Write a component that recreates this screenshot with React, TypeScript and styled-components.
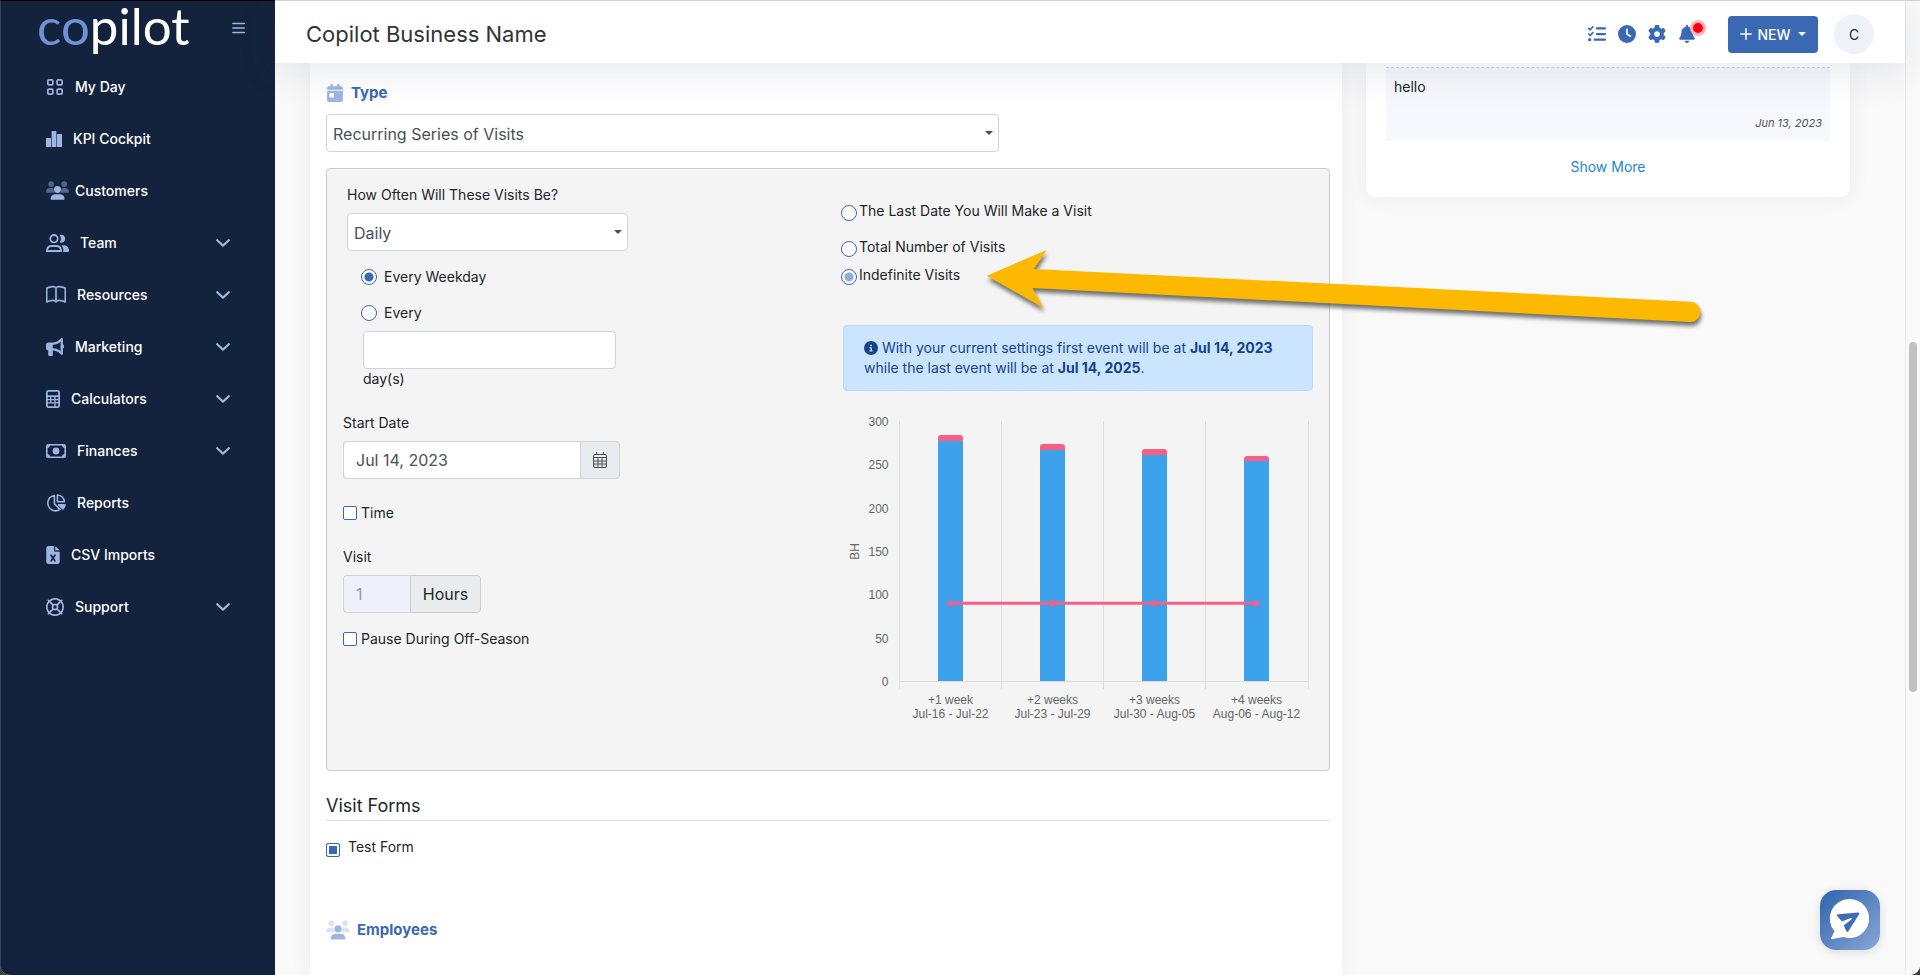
import React, { ReactNode } from 'react';
import styled, { createGlobalStyle, css } from 'styled-components';
import {
  FaListCheck, FaClock, FaGear, FaBell, FaBullhorn, FaFileExcel, FaRegLifeRing, FaCircleInfo,
} from 'react-icons/fa6';
import { FaCalendarDay } from 'react-icons/fa';
import { BsBook } from 'react-icons/bs';

const colors = {
  navy: '#14233d',
  iconBlue: '#9db5e0',
  blue: '#3a68b3',
  softBlue: '#93abd6',
  text: '#212529',
  field: '#495057',
  border: '#ced4da',
  panel: '#f4f4f4',
};

const GlobalStyle = createGlobalStyle`
  *, *::before, *::after { box-sizing: border-box; }
  body { margin: 0; background: #37433f; }
  body, button, input, select { font-family: Inter, "Liberation Sans", sans-serif; }
  button { cursor: pointer; }
`;

const Shell = styled.div`
  position: relative;
  display: flex;
  height: 100vh;
  overflow: hidden;
  border-radius: 0 0 10px 10px;
  background: #f9f9f9;
  color: ${colors.text};
  font-size: 14px;
  line-height: 20px;
`;

/* ---------- sidebar ---------- */

const Sidebar = styled.aside`
  flex: 0 0 275px;
  background: ${colors.navy};
  border-top: 1px solid #000;
  border-left: 1px solid #33435a;
`;

const Brand = styled.div`
  display: flex;
  justify-content: space-between;
  align-items: flex-start;
  height: 60px;
  padding: 0 30px 0 36px;
`;

const Logo = styled.a`
  color: #fff;
  font-family: Lato, sans-serif;
  font-size: 51px;
  line-height: 50px;
  text-decoration: none;
  span { color: #6f93d2; }
`;

const IconButton = styled.button`
  display: flex;
  padding: 0;
  border: 0;
  background: none;
  color: ${colors.blue};
`;

const MenuButton = styled(IconButton)`
  margin-top: 21px;
  color: ${colors.iconBlue};
`;

const NavLink = styled.a`
  display: flex;
  align-items: center;
  gap: 11px;
  height: 52px;
  padding: 0 45px;
  color: #fff;
  font-weight: 500;
  text-decoration: none;
`;

const NavIcon = styled.span<{ $width: number }>`
  display: flex;
  flex: none;
  width: ${(p) => p.$width}px;
  color: ${colors.iconBlue};
  svg { flex: none; }
`;

const NavLabel = styled.span`
  flex: 1;
`;

/* ---------- header ---------- */

const Main = styled.main`
  flex: 1;
  min-width: 0;
  display: flex;
  flex-direction: column;
`;

const TopBar = styled.header`
  position: relative;
  z-index: 1;
  flex: none;
  display: flex;
  align-items: center;
  height: 63px;
  padding: 4px 31px 0 31px;
  background: #fff;
  border-top: 1px solid #d3d3d3;
  box-shadow: 0 8px 40px rgba(40, 50, 90, 0.11);
`;

const Title = styled.h1`
  flex: 1;
  margin: 0;
  color: #333;
  font-size: 22px;
  line-height: 28px;
  font-weight: 400;
`;

const Actions = styled.div`
  display: flex;
  align-items: center;
  gap: 12px;
`;

const BellWrap = styled(IconButton)`
  position: relative;
  margin-right: 20px;
`;

const AlertDot = styled.span`
  position: absolute;
  left: 12px;
  top: -5px;
  width: 16px;
  height: 16px;
  border: 3px solid #fbb4b8;
  border-radius: 50%;
  background: #f90010;
`;

const NewButton = styled.button`
  display: flex;
  align-items: center;
  justify-content: center;
  gap: 5px;
  width: 90px;
  height: 37px;
  padding: 0;
  border: 0;
  border-radius: 4px;
  background: ${colors.blue};
  color: #fff;
  font-size: 14px;
  font-weight: 500;
  svg:last-child { margin-left: 2px; }
`;

const Avatar = styled.button`
  width: 40px;
  height: 40px;
  margin-left: 4px;
  padding: 0;
  border: 0;
  border-radius: 50%;
  background: #eff2fa;
  color: #222;
  font-size: 14px;
`;

/* ---------- content ---------- */

const Content = styled.div`
  flex: 1;
  min-height: 0;
  display: grid;
  grid-template-columns: 258fr 121fr;
  gap: 24px;
  align-items: start;
  padding: 0 55px 0 35px;
`;

const FormCard = styled.section`
  min-height: 100%;
  padding: 20px 12px 34px 16px;
  background: #fff;
  box-shadow: 0 0 24px rgba(0, 0, 0, 0.05);
`;

const SectionTitle = styled.h2<{ $top?: number }>`
  display: flex;
  align-items: center;
  gap: 7px;
  height: 20px;
  margin: ${(p) => p.$top ?? 0}px 0 0;
  color: ${colors.blue};
  font-size: 15px;
  line-height: 20px;
  font-weight: 700;
  svg { flex: none; color: ${colors.iconBlue}; }
`;

const fieldBox = css`
  height: 38px;
  border: 1px solid ${colors.border};
  border-radius: 4px;
  background: #fff;
  color: ${colors.field};
  font-size: 16px;
`;

const SelectWrap = styled.div<{ $width: string; $top?: number }>`
  display: grid;
  align-items: center;
  width: ${(p) => p.$width};
  margin-top: ${(p) => p.$top ?? 0}px;
  > * { grid-area: 1 / 1; }
  svg { justify-self: end; margin-right: 6px; pointer-events: none; }
`;

const SelectBox = styled.select`
  ${fieldBox}
  width: 100%;
  padding: 2px 20px 0 6px;
  appearance: none;
`;

const TextInput = styled.input`
  ${fieldBox}
  padding: 0 12px;
  &:disabled { background: #eef1fa; color: #8b9bb0; opacity: 1; }
`;

const Panel = styled.div`
  display: grid;
  grid-template-columns: minmax(0, 1fr) minmax(0, 1fr);
  gap: 30px;
  margin-top: 16px;
  padding: 16px 16px 15px;
  border: 1px solid #ccc;
  border-radius: 4px;
  background: ${colors.panel};
`;

const Label = styled.label<{ $top?: number }>`
  display: block;
  margin: ${(p) => p.$top ?? 0}px 0 8px;
`;

const Frequency = styled.div`
  padding-left: 4px;
`;

const PatternList = styled.div`
  display: flex;
  flex-direction: column;
  gap: 16px;
  padding: 16px 0 8px 14px;
`;

const ChoiceLabel = styled.label<{ $gap: number; $top?: number }>`
  display: flex;
  align-items: center;
  gap: ${(p) => p.$gap}px;
  margin-top: ${(p) => p.$top ?? 0}px;
`;

const LoweredChoice = styled(ChoiceLabel)`
  align-items: flex-start;
  input[type='radio'] { margin-top: 4px; }
  input[type='checkbox'] { margin-top: 6px; }
`;

const tick = css`
  flex: none;
  margin: 0;
  appearance: none;
  border: 1px solid ${colors.blue};
  background: #fff;
`;

const Radio = styled.input<{ $soft?: boolean }>`
  ${tick}
  width: 16px;
  height: 16px;
  border-radius: 50%;
  &:checked {
    background: radial-gradient(circle, ${(p) => (p.$soft ? colors.softBlue : colors.blue)} 0 4px, #fff 5px);
  }
`;

const Checkbox = styled.input`
  ${tick}
  width: 14px;
  height: 14px;
  border-radius: 2px;
  &:checked { background: ${colors.blue}; box-shadow: inset 0 0 0 2px #fff; }
`;

const Interval = styled.div`
  display: flex;
  flex-direction: column;
  width: 269px;
  padding-left: 16px;
`;

const InputGroup = styled.div<{ $width: number }>`
  display: flex;
  width: ${(p) => p.$width}px;
  ${TextInput} {
    flex: 1;
    min-width: 0;
    border-radius: 4px 0 0 4px;
    border-right: 0;
  }
`;

const addon = css`
  display: flex;
  align-items: center;
  justify-content: center;
  border: 1px solid ${colors.border};
  border-radius: 0 4px 4px 0;
  background: #e9ecef;
`;

const DateButton = styled.button`
  ${addon}
  width: 40px;
  padding: 0;
  color: ${colors.field};
`;

const Unit = styled.span`
  ${addon}
  width: 71px;
  border-color: #ccc;
  font-size: 16px;
`;

const EndOptions = styled.div`
  display: flex;
  flex-direction: column;
  margin: 16px 0 40px -2px;
`;

const Notice = styled.p`
  margin: 0 0 16px;
  padding: 12px 20px;
  border: 1px solid #b8daff;
  border-radius: 4px;
  background: #cce5ff;
  color: #14438a;
  svg { vertical-align: -2px; }
`;

const Chart = styled.svg`
  display: block;
  width: 100%;
  height: auto;
  font-family: "Liberation Sans", sans-serif;
  font-size: 12px;
`;

const FormsTitle = styled.h3`
  margin: 23px 0 0;
  padding-bottom: 2px;
  border-bottom: 1px solid #dee2e6;
  font-size: 18px;
  line-height: 24px;
  font-weight: 400;
`;

const NotesCard = styled.section`
  padding: 4px 20px 20px;
  border-radius: 0 0 10px 10px;
  background: #fff;
  box-shadow: 0 0 24px rgba(0, 0, 0, 0.05);
  text-align: center;
`;

const Note = styled.article`
  display: flex;
  flex-direction: column;
  justify-content: space-between;
  height: 74px;
  margin-bottom: 16px;
  padding: 9px 8px 8px;
  border-top: 1px dashed #d5d7dc;
  background: #f7f8fd;
  text-align: left;
  p { margin: 0; }
  time { align-self: flex-end; color: #555; font-size: 11px; font-style: italic; }
`;

const MoreLink = styled.a`
  color: #1c87cf;
  text-decoration: none;
`;

/* ---------- page edge and floating parts ---------- */

const ScrollTrack = styled.div`
  flex: 0 0 15px;
  padding: 341px 2px 0 3px;
  border-left: 1px solid #e8e8e8;
  background: #fafafa;
  border-top: 1px solid #d3d3d3;
`;

const ScrollThumb = styled.div`
  width: 8px;
  height: 350px;
  border-radius: 4px;
  background: #c1c1c1;
`;

const ChatButton = styled.button`
  position: absolute;
  right: 40px;
  bottom: 25px;
  z-index: 2;
  width: 60px;
  height: 60px;
  padding: 0;
  border: 0;
  border-radius: 16px;
  background: linear-gradient(135deg, #2f64ae, #89a6d6);
  box-shadow: 0 2px 10px rgba(0, 0, 0, 0.12);
`;

const Arrow = styled.svg`
  position: absolute;
  left: 980px;
  top: 240px;
  z-index: 2;
  pointer-events: none;
  filter: drop-shadow(1px 4px 2px rgba(0, 0, 0, 0.55));
`;

/* ---------- icons ---------- */

const GridIcon = () => (
  <svg width="18" height="18" viewBox="0 0 18 18" fill="none" stroke="currentColor" strokeWidth="1.700" aria-hidden="true">
    <rect x="1.850" y="1.850" width="5" height="5" rx="1.200" />
    <rect x="11.150" y="1.850" width="5" height="5" rx="1.200" />
    <rect x="1.850" y="11.150" width="5" height="5" rx="1.200" />
    <rect x="11.150" y="11.150" width="5" height="5" rx="1.200" />
  </svg>
);

const PeopleIcon = ({ width, faded }: { width: number; faded: number }) => (
  <svg width={width} height={(width * 20) / 24} viewBox="0 0 24 20" fill="currentColor" aria-hidden="true">
    <g opacity={faded}>
      <circle cx="5.4" cy="3.2" r="3" />
      <circle cx="19" cy="3.2" r="3" />
      <path d="M0 11.6C0 9 1.6 7.4 4 7.4h2.2c1 0 1.4.3 2.1.8-.4 1.6 0 3 .8 4H.6c-.4 0-.6-.2-.6-.6z" />
      <path d="M24 11.6C24 9 22.4 7.4 20 7.4h-2c-1 0-1.6.3-2.3.8.4 1.6 0 3-.8 4h8.500c.4 0 .6-.2.6-.6z" />
    </g>
    <circle cx="12" cy="8.800" r="3.600" />
    <path d="M4.800 18.800c0-3.200 2-5 5-5h4.600c3 0 5 1.800 5 5 0 .5-.3.800-.8.800H5.600c-.5 0-.8-.3-.8-.8z" />
  </svg>
);

const TeamIcon = () => (
  <svg width="23" height="18" viewBox="0 0 23 18" fill="none" stroke="currentColor" strokeWidth="1.800" aria-hidden="true">
    <circle cx="8" cy="4.700" r="3.700" />
    <path d="M1 17c0-3.400 2-5 4.800-5h4.400c2.800 0 4.800 1.600 4.800 5z" />
    <path d="M13.600 1c3.600-.8 5.600 1.200 5.600 3.800s-2.200 4.500-5.400 3.700c1.600-2.400 1.400-5.400-.2-7.500z" fill="currentColor" stroke="none" />
    <path d="M15.500 11.200h2.300c3 0 5.200 2.200 5.200 5.400 0 .8-.4 1.300-1.100 1.300h-4.700c.4-2.700-.2-5-1.700-6.700z" fill="currentColor" stroke="none" />
  </svg>
);

const BookIcon = styled(BsBook)`
  stroke: currentColor;
  stroke-width: 0.4px;
`;

const BarsIcon = () => (
  <svg width="16" height="16" viewBox="0 0 16 16" fill="currentColor" aria-hidden="true">
    <rect x="0" y="7" width="5" height="9" rx="0.500" />
    <rect x="5.600" y="0" width="4.800" height="16" rx="0.500" />
    <rect x="11" y="3" width="5" height="13" rx="0.500" />
  </svg>
);

const CalculatorIcon = () => (
  <svg width="14" height="18" viewBox="0 0 14 18" fill="none" stroke="currentColor" aria-hidden="true">
    <rect x="0.900" y="0.900" width="12.200" height="16.200" rx="1.500" strokeWidth="1.800" />
    <path d="M1 6.200h12" strokeWidth="1.800" />
    <path d="M1 9.600h12M1 12.800h12M4.800 6v7M9 6v11" strokeWidth="1.300" />
  </svg>
);

const MoneyIcon = () => (
  <svg width="20" height="14" viewBox="0 0 20 14" fill="none" stroke="currentColor" strokeWidth="1.600" aria-hidden="true">
    <rect x="0.800" y="0.800" width="18.400" height="12.400" rx="1.200" />
    <circle cx="10" cy="7" r="3.400" fill="currentColor" stroke="none" />
    <path d="M1 3.200c1.200 0 2.200-1 2.200-2.200M19 3.200c-1.200 0-2.200-1-2.200-2.200M1 10.800c1.200 0 2.200 1 2.200 2.200M19 10.800c-1.200 0-2.200 1-2.200 2.200" />
  </svg>
);

const PieIcon = () => (
  <svg width="20" height="18" viewBox="0 0 20 18" fill="none" stroke="currentColor" strokeWidth="1.600" strokeLinejoin="round" aria-hidden="true">
    <path d="M8.400 1.500C4.500 2 1.800 5.200 1.800 9c0 4.300 3.300 7.900 7.600 7.900 1.700 0 3.200-.5 4.600-1.500L8.400 9.800z" />
    <path d="M11.400 1v6.700h7C18.200 4 15.200 1.200 11.400 1z" />
    <path d="M12.600 10.800H19c-.2 1.700-.9 3-2 4.200z" fill="currentColor" />
  </svg>
);

const SheetIcon = styled(FaFileExcel)`
  width: 14px;
  height: 18px;
`;

const ChevronIcon = () => (
  <svg width="14" height="8" viewBox="0 0 14 8" fill="none" stroke={colors.iconBlue} strokeWidth="2.200" strokeLinecap="round" strokeLinejoin="round" aria-hidden="true">
    <path d="M1.200 1.200 7 6.600l5.800-5.400" />
  </svg>
);

const CaretIcon = ({ color }: { color: string }) => (
  <svg width="8" height="4" viewBox="0 0 8 4" fill={color} aria-hidden="true">
    <path d="M0 0h8L4 4z" />
  </svg>
);

const CalendarIcon = () => (
  <svg width="14" height="16" viewBox="0 0 14 16" fill="none" stroke="currentColor" aria-hidden="true">
    <rect x="0.500" y="2.500" width="13" height="13" rx="1.500" />
    <path d="M3.500 0v2.500M10.500 0v2.500M.5 5.500h13M.5 9h13M.5 12h13M5 5.500v10M9 5.500v10" />
  </svg>
);

type NavItem = { label: string; slot: number; icon: ReactNode; expandable?: boolean };

const navItems: NavItem[] = [
  { label: 'My Day', slot: 18, icon: <GridIcon /> },
  { label: 'KPI Cockpit', slot: 16, icon: <BarsIcon /> },
  { label: 'Customers', slot: 18, icon: <PeopleIcon width={23} faded={0.45} /> },
  { label: 'Team', slot: 23, icon: <TeamIcon />, expandable: true },
  { label: 'Resources', slot: 20, icon: <BookIcon size={20} />, expandable: true },
  { label: 'Marketing', slot: 18, icon: <FaBullhorn size={18} />, expandable: true },
  { label: 'Calculators', slot: 14, icon: <CalculatorIcon />, expandable: true },
  { label: 'Finances', slot: 20, icon: <MoneyIcon />, expandable: true },
  { label: 'Reports', slot: 20, icon: <PieIcon /> },
  { label: 'CSV Imports', slot: 14, icon: <SheetIcon /> },
  { label: 'Support', slot: 18, icon: <FaRegLifeRing size={18} />, expandable: true },
];

const weeks = [
  { name: '+1 week', range: 'Jul-16 - Jul-22', top: 28, split: 34 },
  { name: '+2 weeks', range: 'Jul-23 - Jul-29', top: 37, split: 43 },
  { name: '+3 weeks', range: 'Jul-30 - Aug-05', top: 42, split: 48 },
  { name: '+4 weeks', range: 'Aug-06 - Aug-12', top: 49, split: 54 },
];

const axisTicks = [300, 250, 200, 150, 100, 50, 0];

const HoursChart = () => (
  <Chart viewBox="0 0 470 348" role="img" aria-label="Budgeted hours for the next four weeks">
    <g stroke="#dedede">
      {[56.5, 158.5, 260.5, 362.5, 465.5].map((x) => (
        <line key={x} x1={x} x2={x} y1="14" y2="282" />
      ))}
      <line x1="56" x2="466" y1="274.5" y2="274.5" />
    </g>
    <g fill="#666" textAnchor="end">
      {axisTicks.map((value) => (
        <text key={value} x="45.500" y={279 - (value * 260) / 300}>{value}</text>
      ))}
    </g>
    <text fill="#666" textAnchor="middle" transform="translate(15.500 144.500) rotate(-90)">BH</text>
    {weeks.map((week, i) => {
      const x = 95 + i * 102;
      return (
        <g key={week.name}>
          <rect x={x} y={week.split} width="25" height={274 - week.split} fill="#3ba2eb" />
          <path d={`M${x} ${week.split}v${3 - week.split + week.top}q0-3 3-3h19q3 0 3 3v${week.split - week.top - 3}z`} fill="#f95f85" />
          <g fill="#666" textAnchor="middle">
            <text x={x + 12.5} y="297">{week.name}</text>
            <text x={x + 12.5} y="311">{week.range}</text>
          </g>
        </g>
      );
    })}
    <line x1="107.500" x2="413.500" y1="196.300" y2="196.300" stroke="#f95f85" strokeWidth="3" />
    <g fill="#f95f85" fillOpacity="0.5" stroke="#f95f85">
      {weeks.map((week, i) => (
        <circle key={week.name} cx={107.5 + i * 102} cy="196.300" r="3" />
      ))}
    </g>
  </Chart>
);

const App = () => (
  <>
    <GlobalStyle />
    <Shell>
      <Sidebar>
        <Brand>
          <Logo href="#home"><span>co</span>pilot</Logo>
          <MenuButton aria-label="Collapse menu">
            <svg width="13" height="12" viewBox="0 0 13 12" stroke="currentColor" strokeWidth="1.600" strokeLinecap="round" aria-hidden="true">
              <path d="M.8 1.500h11.400M.8 6h11.400M.8 10.500h11.400" />
            </svg>
          </MenuButton>
        </Brand>
        <nav>
          {navItems.map((item) => (
            <NavLink key={item.label} href="#nav">
              <NavIcon $width={item.slot}>{item.icon}</NavIcon>
              <NavLabel>{item.label}</NavLabel>
              {item.expandable && <ChevronIcon />}
            </NavLink>
          ))}
        </nav>
      </Sidebar>

      <Main>
        <TopBar>
          <Title>Copilot Business Name</Title>
          <Actions>
            <IconButton aria-label="Tasks"><FaListCheck size={18} /></IconButton>
            <IconButton aria-label="Time"><FaClock size={18} /></IconButton>
            <IconButton aria-label="Settings"><FaGear size={18} /></IconButton>
            <BellWrap aria-label="Notifications">
              <FaBell size={18} />
              <AlertDot />
            </BellWrap>
            <NewButton>
              <svg width="12" height="12" viewBox="0 0 12 12" stroke="currentColor" strokeWidth="1.500" strokeLinecap="round" aria-hidden="true">
                <path d="M6 .8v10.400M.8 6h10.400" />
              </svg>
              NEW
              <CaretIcon color="#fff" />
            </NewButton>
            <Avatar>C</Avatar>
          </Actions>
        </TopBar>

        <Content>
          <FormCard>
            <SectionTitle><FaCalendarDay size={18} />Type</SectionTitle>
            <SelectWrap $width="67%" $top={11}>
              <SelectBox aria-label="Type" defaultValue="recurring">
                <option value="recurring">Recurring Series of Visits</option>
              </SelectBox>
              <CaretIcon color="#495057" />
            </SelectWrap>

            <Panel>
              <div>
                <Frequency>
                  <Label htmlFor="often">How Often Will These Visits Be?</Label>
                  <SelectWrap $width="281px">
                    <SelectBox id="often" defaultValue="daily">
                      <option value="daily">Daily</option>
                    </SelectBox>
                    <CaretIcon color="#495057" />
                  </SelectWrap>
                  <PatternList>
                    <ChoiceLabel $gap={7}>
                      <Radio type="radio" name="pattern" defaultChecked />Every Weekday
                    </ChoiceLabel>
                    <ChoiceLabel $gap={7}>
                      <Radio type="radio" name="pattern" />Every
                    </ChoiceLabel>
                  </PatternList>
                  <Interval>
                    <TextInput id="interval" />
                    <label htmlFor="interval">day(s)</label>
                  </Interval>
                </Frequency>

                <Label htmlFor="start" $top={24}>Start Date</Label>
                <InputGroup $width={277}>
                  <TextInput id="start" defaultValue="Jul 14, 2023" />
                  <DateButton aria-label="Pick a date"><CalendarIcon /></DateButton>
                </InputGroup>
                <ChoiceLabel $gap={4} $top={24}><Checkbox type="checkbox" />Time</ChoiceLabel>

                <Label htmlFor="length" $top={24}>Visit</Label>
                <InputGroup $width={138}>
                  <TextInput id="length" defaultValue="1" disabled />
                  <Unit>Hours</Unit>
                </InputGroup>
                <ChoiceLabel $gap={4} $top={16}><Checkbox type="checkbox" />Pause During Off-Season</ChoiceLabel>
              </div>

              <div>
                <EndOptions>
                  <LoweredChoice $gap={2}>
                    <Radio type="radio" name="end" />The Last Date You Will Make a Visit
                  </LoweredChoice>
                  <LoweredChoice $gap={2} $top={16}>
                    <Radio type="radio" name="end" />Total Number of Visits
                  </LoweredChoice>
                  <LoweredChoice $gap={2} $top={8}>
                    <Radio type="radio" name="end" $soft defaultChecked />Indefinite Visits
                  </LoweredChoice>
                </EndOptions>
                <Notice>
                  <FaCircleInfo size={14} /> With your current settings first event will be at <b>Jul 14, 2023</b> while
                  the last event will be at <b>Jul 14, 2025</b>.
                </Notice>
                <HoursChart />
              </div>
            </Panel>

            <FormsTitle>Visit Forms</FormsTitle>
            <LoweredChoice $gap={8} $top={16}>
              <Checkbox type="checkbox" defaultChecked />Test Form
            </LoweredChoice>

            <SectionTitle $top={63}><PeopleIcon width={24} faded={0.35} />Employees</SectionTitle>
          </FormCard>

          <NotesCard>
            <Note>
              <p>hello</p>
              <time>Jun 13, 2023</time>
            </Note>
            <MoreLink href="#more">Show More</MoreLink>
          </NotesCard>
        </Content>
      </Main>

      <ScrollTrack><ScrollThumb /></ScrollTrack>

      <Arrow width="740" height="100" viewBox="0 0 740 100" aria-hidden="true">
        <path d="M6.800 35.700 66.600 10 54 29 711.200 61.700a10.200 10.200 0 0 1 0 20.300L52.500 48 63.500 68z" fill="#fcb900" />
      </Arrow>

      <ChatButton aria-label="Open chat">
        <svg width="60" height="60" viewBox="0 0 60 60" aria-hidden="true">
          <path d="M29.500 9a19.500 19.500 0 1 1-6 38l-11 2c-1.500.2-1.800-.8-1-1.800l3-6A19.500 19.500 0 0 1 29.500 9z" fill="#fff" />
          <path d="M18 24.200 38 22.500c1.300 0 1.700.8 1 1.900L28.500 41c-.8 1.200-1.600 1.200-2.200 0l-2.600-5.600 7.600-5.800c1-.9.500-1.900-.8-1.500L22 31.500l-4.800-5.400c-.7-1-.4-1.800.8-1.900z" fill="#3d6db3" />
        </svg>
      </ChatButton>
    </Shell>
  </>
);

export default App;
